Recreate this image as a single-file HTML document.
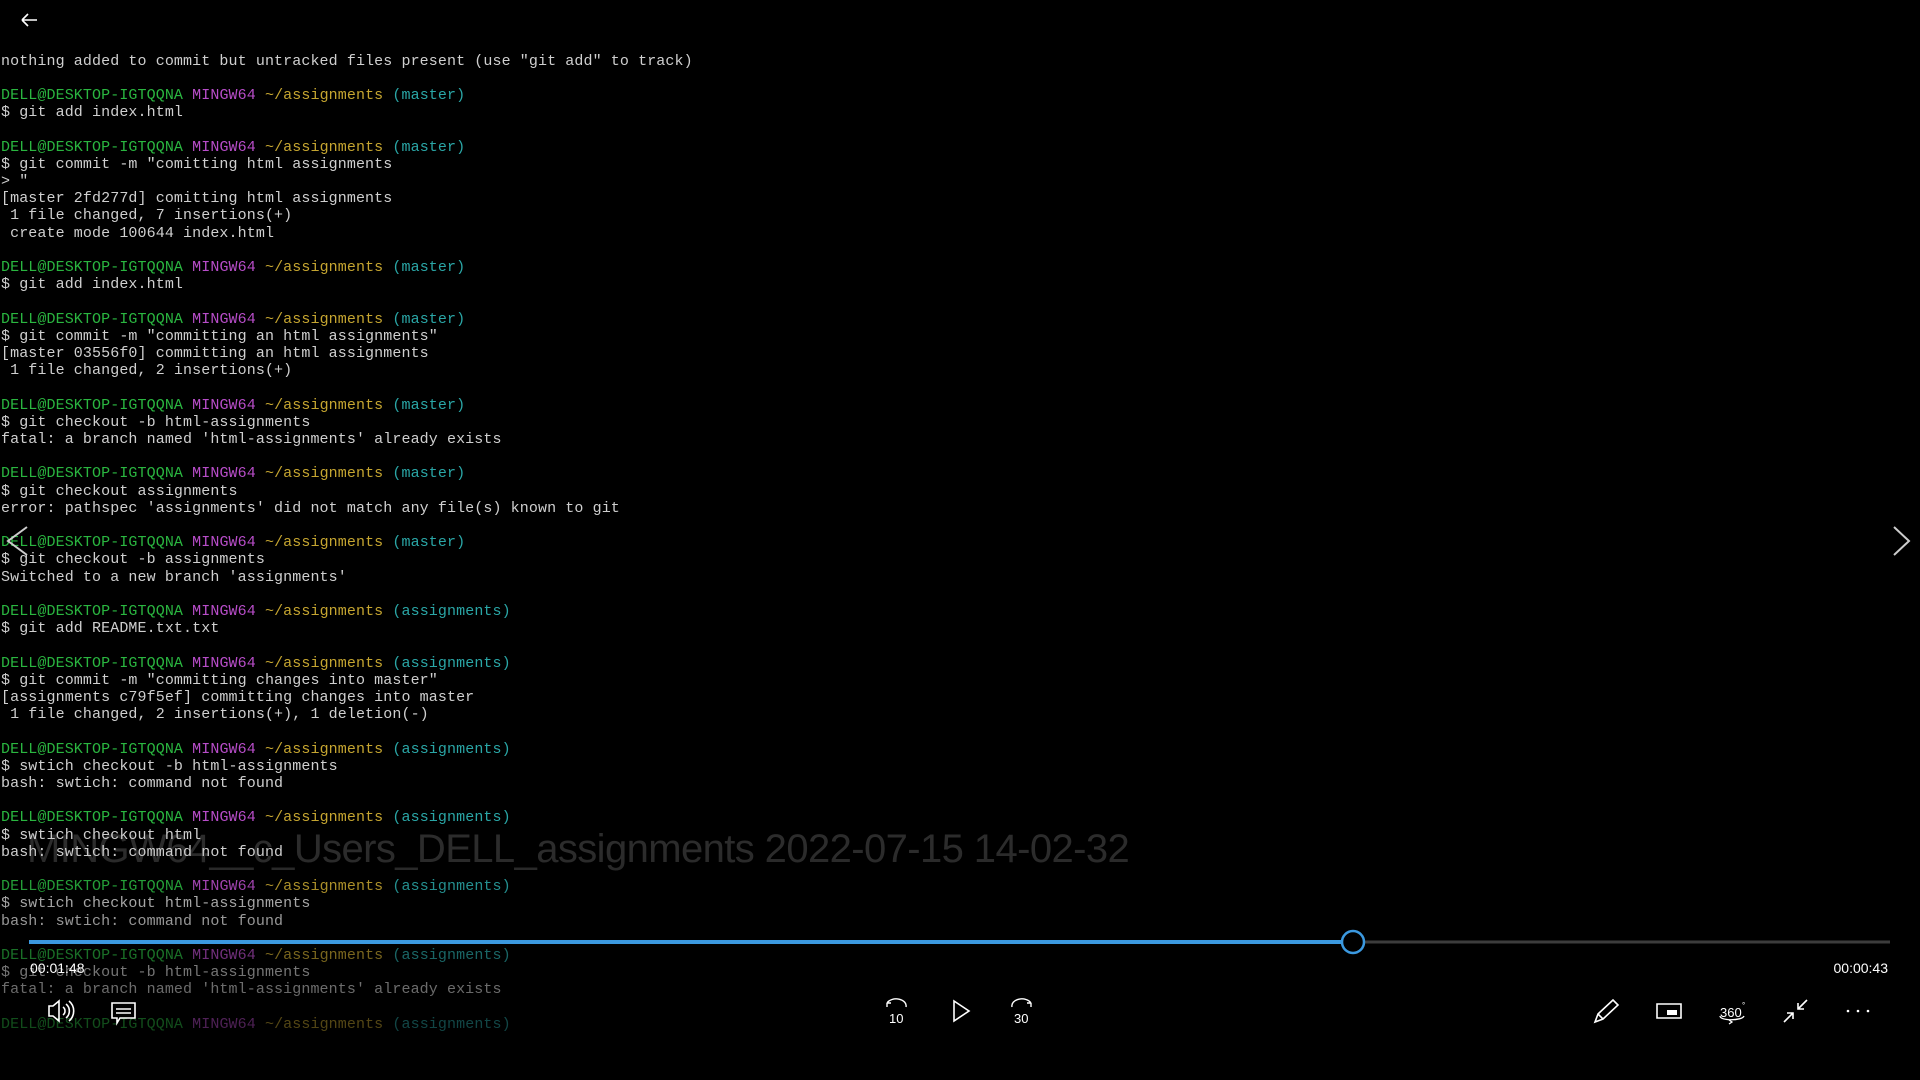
<!DOCTYPE html>
<html><head><meta charset="utf-8"><style>
html,body{margin:0;padding:0;background:#000;width:1920px;height:1080px;overflow:hidden;position:relative}
pre{position:absolute;left:1px;top:52.5px;margin:0;font-family:"Liberation Mono",monospace;font-size:15px;line-height:17.2px;color:#cfcfcf;letter-spacing:0.1px}
.g{color:#2ab640}.p{color:#b84dc9}.y{color:#c5a530}.c{color:#2aa6a6}
.fade{position:absolute;left:0;top:0;width:1920px;height:1080px;background:linear-gradient(to bottom,rgba(0,0,0,0) 0,rgba(0,0,0,0) 850px,rgba(0,0,0,.35) 940px,rgba(0,0,0,.6) 1030px,rgba(0,0,0,.75) 1080px)}
.title{position:absolute;left:27px;top:827px;font-family:"Liberation Sans",sans-serif;font-size:40px;color:#2c2c2c;letter-spacing:-0.6px;white-space:nowrap}
.t{position:absolute;font-family:"Liberation Sans",sans-serif;font-size:14px;color:#fff}
svg{position:absolute;left:0;top:0}
</style></head><body>
<div class="title">MINGW64__c_Users_DELL_assignments 2022-07-15 14-02-32</div>
<pre>nothing added to commit but untracked files present (use "git add" to track)

<span class="g">DELL@DESKTOP-IGTQQNA</span> <span class="p">MINGW64</span> <span class="y">~/assignments</span> <span class="c">(master)</span>
$ git add index.html

<span class="g">DELL@DESKTOP-IGTQQNA</span> <span class="p">MINGW64</span> <span class="y">~/assignments</span> <span class="c">(master)</span>
$ git commit -m "comitting html assignments
&gt; "
[master 2fd277d] comitting html assignments
 1 file changed, 7 insertions(+)
 create mode 100644 index.html

<span class="g">DELL@DESKTOP-IGTQQNA</span> <span class="p">MINGW64</span> <span class="y">~/assignments</span> <span class="c">(master)</span>
$ git add index.html

<span class="g">DELL@DESKTOP-IGTQQNA</span> <span class="p">MINGW64</span> <span class="y">~/assignments</span> <span class="c">(master)</span>
$ git commit -m "committing an html assignments"
[master 03556f0] committing an html assignments
 1 file changed, 2 insertions(+)

<span class="g">DELL@DESKTOP-IGTQQNA</span> <span class="p">MINGW64</span> <span class="y">~/assignments</span> <span class="c">(master)</span>
$ git checkout -b html-assignments
fatal: a branch named 'html-assignments' already exists

<span class="g">DELL@DESKTOP-IGTQQNA</span> <span class="p">MINGW64</span> <span class="y">~/assignments</span> <span class="c">(master)</span>
$ git checkout assignments
error: pathspec 'assignments' did not match any file(s) known to git

<span class="g">DELL@DESKTOP-IGTQQNA</span> <span class="p">MINGW64</span> <span class="y">~/assignments</span> <span class="c">(master)</span>
$ git checkout -b assignments
Switched to a new branch 'assignments'

<span class="g">DELL@DESKTOP-IGTQQNA</span> <span class="p">MINGW64</span> <span class="y">~/assignments</span> <span class="c">(assignments)</span>
$ git add README.txt.txt

<span class="g">DELL@DESKTOP-IGTQQNA</span> <span class="p">MINGW64</span> <span class="y">~/assignments</span> <span class="c">(assignments)</span>
$ git commit -m "committing changes into master"
[assignments c79f5ef] committing changes into master
 1 file changed, 2 insertions(+), 1 deletion(-)

<span class="g">DELL@DESKTOP-IGTQQNA</span> <span class="p">MINGW64</span> <span class="y">~/assignments</span> <span class="c">(assignments)</span>
$ swtich checkout -b html-assignments
bash: swtich: command not found

<span class="g">DELL@DESKTOP-IGTQQNA</span> <span class="p">MINGW64</span> <span class="y">~/assignments</span> <span class="c">(assignments)</span>
$ swtich checkout html
bash: swtich: command not found

<span class="g">DELL@DESKTOP-IGTQQNA</span> <span class="p">MINGW64</span> <span class="y">~/assignments</span> <span class="c">(assignments)</span>
$ swtich checkout html-assignments
bash: swtich: command not found

<span class="g">DELL@DESKTOP-IGTQQNA</span> <span class="p">MINGW64</span> <span class="y">~/assignments</span> <span class="c">(assignments)</span>
$ git checkout -b html-assignments
fatal: a branch named 'html-assignments' already exists

<span class="g">DELL@DESKTOP-IGTQQNA</span> <span class="p">MINGW64</span> <span class="y">~/assignments</span> <span class="c">(assignments)</span></pre>
<div class="fade"></div>
<div class="t" style="left:30px;top:960px">00:01:48</div>
<div class="t" style="right:32px;top:960px">00:00:43</div>
<svg width="1920" height="1080" fill="none" stroke="#fff" stroke-width="1.6">
<path d="M22 20H37M22 20l6-6M22 20l6 6"/>
<path d="M27 527L8 541L27 555" stroke="#ccc" stroke-width="2"/>
<path d="M1894 527L1909 541L1894 555" stroke="#ccc" stroke-width="2"/>
<line x1="29" y1="942" x2="1890" y2="942" stroke="#3c3c3c" stroke-width="3"/>
<line x1="29" y1="942" x2="1342" y2="942" stroke="#3b99e0" stroke-width="4"/>
<circle cx="1353" cy="942" r="11" fill="#000" stroke="#3b99e0" stroke-width="2.5"/>
<path d="M49 1006h4l6-5v20l-6-5h-4z"/>
<path d="M63 1007a5 5 0 0 1 0 8M66 1004a9 9 0 0 1 0 14M69 1001a13 13 0 0 1 0 20"/>
<path d="M112 1003h23v15h-15l-3 5v-5h-5z"/>
<path d="M116 1009h15M116 1013h15"/>
<path d="M887 1003a10 7 0 0 1 19 4M887 1003l0 4M887 1003l4 0" stroke-width="1.4"/>
<text x="889" y="1023" fill="#fff" stroke="none" font-family="Liberation Sans,sans-serif" font-size="13">10</text>
<path d="M954 1001l15 10-15 10z"/>
<path d="M1012 1007a10 7 0 0 1 19-4M1031 1003l0 4M1031 1003l-4 0" stroke-width="1.4"/>
<text x="1014" y="1023" fill="#fff" stroke="none" font-family="Liberation Sans,sans-serif" font-size="13">30</text>
<path d="M1595 1022l3-8 15-14 5 5-15 14z M1598 1014l5 5"/>
<path d="M1657 1004h24v14h-24z"/>
<rect x="1667" y="1010" width="10" height="5" fill="#fff" stroke="none"/>
<text x="1720" y="1017" fill="#fff" stroke="none" font-family="Liberation Sans,sans-serif" font-size="13">360</text>
<text x="1742" y="1008" fill="#fff" stroke="none" font-family="Liberation Sans,sans-serif" font-size="8">°</text>
<path d="M1720 1016c0 5 22 5 24 0M1729 1020l3 2-3 2" stroke-width="1.3"/>
<path d="M1784 1022l9-9M1787 1013h6v6M1807 1000l-9 9M1798 1003v6h6"/>
<circle cx="1848" cy="1011" r="1.3" fill="#fff" stroke="none"/>
<circle cx="1858" cy="1011" r="1.3" fill="#fff" stroke="none"/>
<circle cx="1868" cy="1011" r="1.3" fill="#fff" stroke="none"/>
</svg>
</body></html>
